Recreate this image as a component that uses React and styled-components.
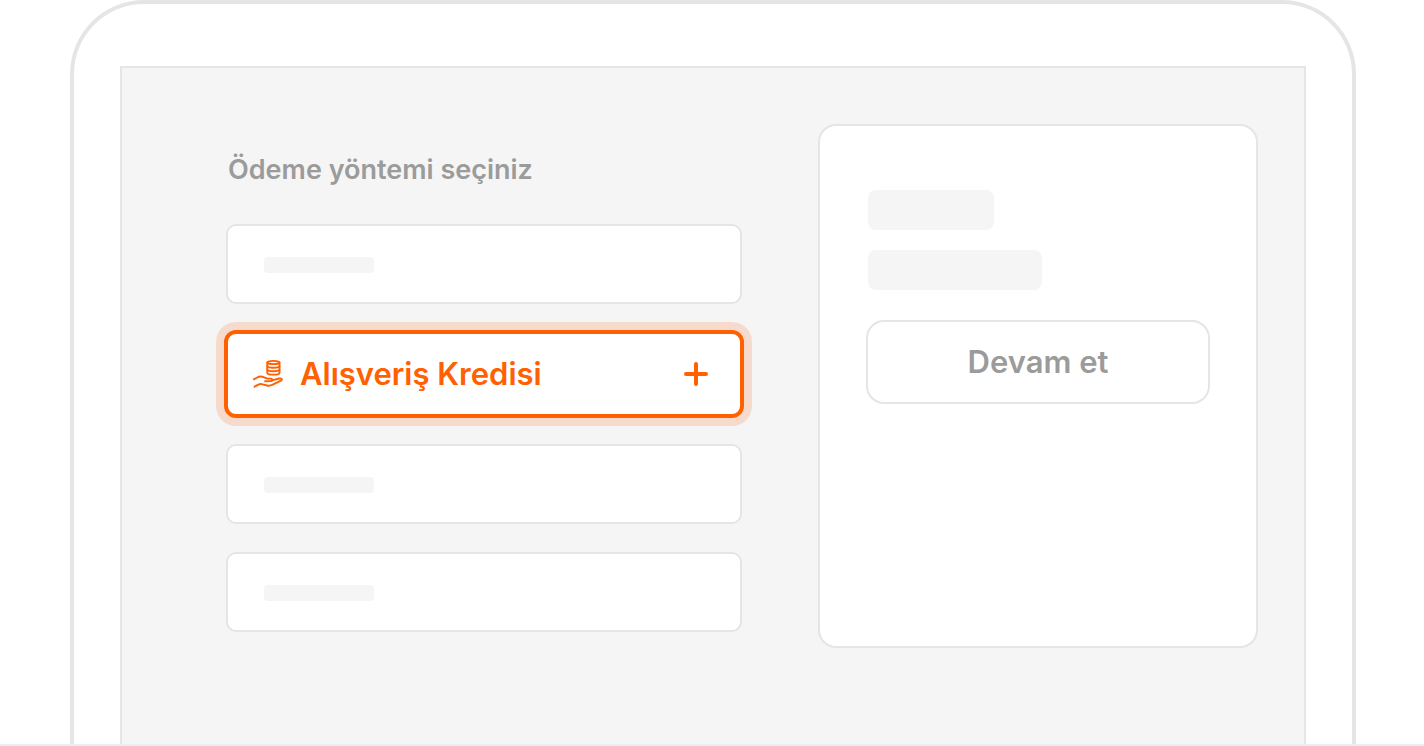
import styled, { createGlobalStyle } from "styled-components";

const GlobalStyle = createGlobalStyle`
  * {
    box-sizing: border-box;
  }

  body {
    margin: 0;
    background-color: #ffffff;
    font-family: Inter, "Liberation Sans", sans-serif;
    -webkit-font-smoothing: antialiased;
  }
`;

const PageWrap = styled.div`
  display: flex;
  height: 100vh;
  padding: 0 68px 0 70px;
  overflow: hidden;
  border-bottom: 2px solid #eeeeee;
`;

const Device = styled.div`
  display: flex;
  flex: 1;
  padding: 62px 46px 0;
  border: 4px solid #e5e5e5;
  border-bottom: 0;
  border-radius: 74px 74px 0 0;
`;

const Screen = styled.main`
  display: grid;
  flex: 1;
  grid-template-columns: minmax(0, 1fr) 440px;
  align-items: start;
  gap: 76px;
  padding: 56px 46px 0 104px;
  border: 2px solid #e5e5e5;
  border-bottom: 0;
  background-color: #f5f5f5;
`;

const Methods = styled.section`
  padding-top: 24px;
`;

const Title = styled.h1`
  margin: 0 0 32px 2px;
  color: #9b9b9b;
  font-size: 27px;
  font-weight: 600;
  line-height: 44px;
`;

const MethodList = styled.div`
  display: grid;
  gap: 28px;
`;

const Method = styled.button`
  display: flex;
  align-items: center;
  height: 80px;
  padding: 2px 36px 0;
  border: 2px solid #e5e5e5;
  border-radius: 10px;
  background-color: #ffffff;
`;

const ActiveMethod = styled(Method)`
  gap: 16px;
  height: 88px;
  margin: -2px;
  padding: 0 32px 0 24px;
  border: 4px solid #ff6000;
  border-radius: 12px;
  box-shadow: 0 0 0 8px #f6dbcc;
  color: #ff6000;
`;

const MethodName = styled.span`
  flex: 1;
  font-family: Inter, "Liberation Sans", sans-serif;
  font-size: 31px;
  font-weight: 600;
  line-height: 40px;
  text-align: left;
`;

const Line = styled.span`
  width: 110px;
  height: 16px;
  border-radius: 4px;
  background-color: #f5f5f5;
`;

const Summary = styled.aside`
  min-height: 524px;
  padding: 64px 46px;
  border: 2px solid #e5e5e5;
  border-radius: 18px;
  background-color: #ffffff;
`;

const Block = styled.div`
  width: ${(props) => props.$width};
  height: 40px;
  margin: 0 0 20px 2px;
  border-radius: 8px;
  background-color: #f5f5f5;
`;

const ContinueButton = styled.button`
  width: 100%;
  height: 84px;
  margin-top: 10px;
  padding: 0;
  border: 2px solid #e5e5e5;
  border-radius: 18px;
  background-color: #ffffff;
  color: #9b9b9b;
  font-family: Inter, "Liberation Sans", sans-serif;
  font-size: 31px;
  font-weight: 600;
  line-height: 40px;
`;

const CreditIcon = () => (
  <svg
    width="32"
    height="32"
    viewBox="0 0 32 32"
    fill="none"
    stroke="currentColor"
    strokeWidth="1.9"
    strokeLinecap="round"
    strokeLinejoin="round"
    aria-hidden="true"
  >
    <ellipse cx="21.4" cy="4.5" rx="6.1" ry="1.6" />
    <path d="M15.3 4.500v10.400c0 1 2.700 1.700 6.100 1.700s6.100-.7 6.100-1.700V4.500" />
    <path d="M15.300 8c0 1 2.700 1.700 6.100 1.700s6.100-.7 6.100-1.700" />
    <path d="M15.300 11.500c0 1 2.700 1.700 6.100 1.700s6.100-.7 6.100-1.700" />
    <path d="M1.900 21.300l3.300-1.800c2.200-1.200 4.700-1.200 6.800-.2l2 .9c.7.3 1.400.4 2.100.4h2.900c1.500 0 1.700 2.300.1 2.400l-6 .2" />
    <path d="M20 22.400l7.200-1.900c2.500-.6 3.600 1.200 1.600 2.200l-8 4c-2 1-3.800 1.300-5.900.8l-5-1.300c-1.400-.4-2.500-.2-3.600.5l-3.700 2" />
  </svg>
);

const PlusIcon = () => (
  <svg
    width="24"
    height="24"
    viewBox="0 0 24 24"
    stroke="currentColor"
    strokeWidth="4"
    strokeLinecap="round"
    aria-hidden="true"
  >
    <path d="M12 2v20M2 12h20" />
  </svg>
);

export default function App() {
  return (
    <>
      <GlobalStyle />
      <PageWrap>
        <Device>
          <Screen>
            <Methods>
              <Title>Ödeme yöntemi seçiniz</Title>
              <MethodList>
                <Method type="button">
                  <Line />
                </Method>
                <ActiveMethod type="button">
                  <CreditIcon />
                  <MethodName>Alışveriş Kredisi</MethodName>
                  <PlusIcon />
                </ActiveMethod>
                <Method type="button">
                  <Line />
                </Method>
                <Method type="button">
                  <Line />
                </Method>
              </MethodList>
            </Methods>

            <Summary>
              <Block $width="126px" />
              <Block $width="174px" />
              <ContinueButton type="button">Devam et</ContinueButton>
            </Summary>
          </Screen>
        </Device>
      </PageWrap>
    </>
  );
}
